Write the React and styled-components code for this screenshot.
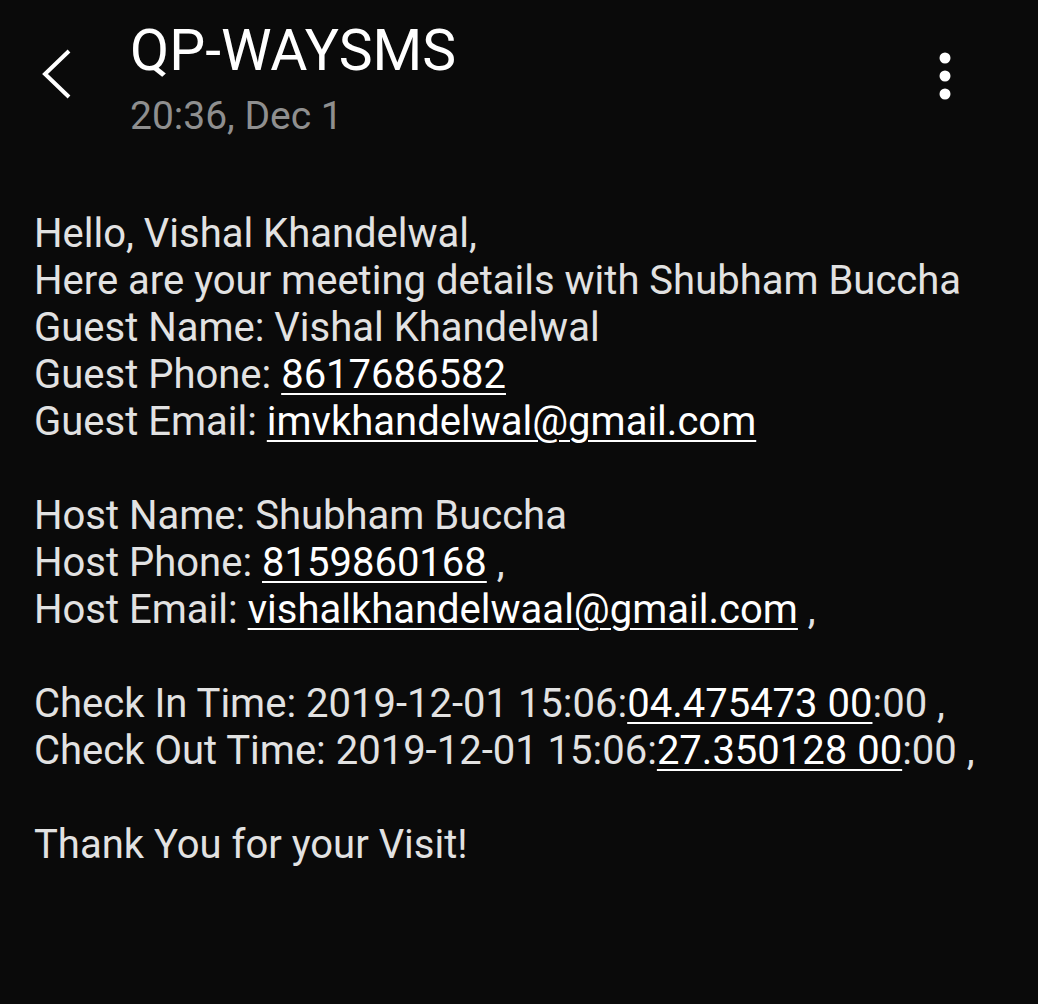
import React from 'react';
import styled, {createGlobalStyle} from 'styled-components';

const GlobalStyle = createGlobalStyle`
    html, body {
        margin: 0;
        padding: 0;
        background: #0a0a0a;
    }
    body {
        font-family: Roboto, "Noto Sans", sans-serif;
    }
`;

const Screen = styled.div`
    width: 1038px;
    height: 1004px;
    background: #0a0a0a;
    overflow: hidden;
`;

const Header = styled.header`
    display: flex;
    align-items: flex-start;
    padding: 18px 0 0 0;
    height: 192px;
    box-sizing: border-box;
`;

const BackButton = styled.div`
    width: 130px;
    height: 100px;
    display: flex;
    align-items: center;
    justify-content: flex-start;
    padding-left: 40px;
    padding-top: 12px;
    box-sizing: border-box;
`;

const TitleBlock = styled.div`
    flex: 1;
    display: flex;
    flex-direction: column;
`;

const Title = styled.h1`
    margin: 0;
    color: #ffffff;
    font-size: 57px;
    font-weight: 400;
    line-height: 66px;
`;

const Subtitle = styled.div`
    color: #8f8f8f;
    font-size: 39px;
    line-height: 50px;
    margin-top: 7px;
`;

const MenuButton = styled.div`
    width: 90px;
    display: flex;
    justify-content: center;
    padding-top: 33px;
    margin-right: 48px;
`;

const Message = styled.div`
    padding: 0 0 0 34px;
    margin-top: 18px;
    color: #e2e2e2;
    font-size: 40px;
    line-height: 47px;
`;

const Line = styled.div`
    height: 47px;
    white-space: pre;
`;

const Link = styled.span`
    color: #ffffff;
    text-decoration: underline;
    text-decoration-thickness: 2px;
    text-underline-offset: 5px;
`;

const BackIcon = () => (
    <svg width="34" height="52" viewBox="0 0 34 52">
        <path d="M29 3 L5 26 L29 49" fill="none" stroke="#ffffff" strokeWidth="4"/>
    </svg>
);

const DotsIcon = () => (
    <svg width="14" height="50" viewBox="0 0 14 50">
        <circle cx="7" cy="7" r="5.5" fill="#ffffff"/>
        <circle cx="7" cy="25" r="5.5" fill="#ffffff"/>
        <circle cx="7" cy="43" r="5.5" fill="#ffffff"/>
    </svg>
);

const App = () => (
    <Screen>
        <GlobalStyle/>
        <Header>
            <BackButton>
                <BackIcon/>
            </BackButton>
            <TitleBlock>
                <Title>QP-WAYSMS</Title>
                <Subtitle>20:36, Dec 1</Subtitle>
            </TitleBlock>
            <MenuButton>
                <DotsIcon/>
            </MenuButton>
        </Header>
        <Message>
            <Line>Hello, Vishal Khandelwal,</Line>
            <Line>Here are your meeting details with Shubham Buccha</Line>
            <Line>Guest Name: Vishal Khandelwal</Line>
            <Line>Guest Phone: <Link>8617686582</Link></Line>
            <Line>Guest Email: <Link>imvkhandelwal@gmail.com</Link></Line>
            <Line/>
            <Line>Host Name: Shubham Buccha</Line>
            <Line>Host Phone: <Link>8159860168</Link> ,</Line>
            <Line>Host Email: <Link>vishalkhandelwaal@gmail.com</Link> ,</Line>
            <Line/>
            <Line>Check In Time: 2019-12-01 15:06:<Link>04.475473 00</Link>:00 ,</Line>
            <Line>Check Out Time: 2019-12-01 15:06:<Link>27.350128 00</Link>:00 ,</Line>
            <Line/>
            <Line>Thank You for your Visit!</Line>
        </Message>
    </Screen>
);

export default App;
